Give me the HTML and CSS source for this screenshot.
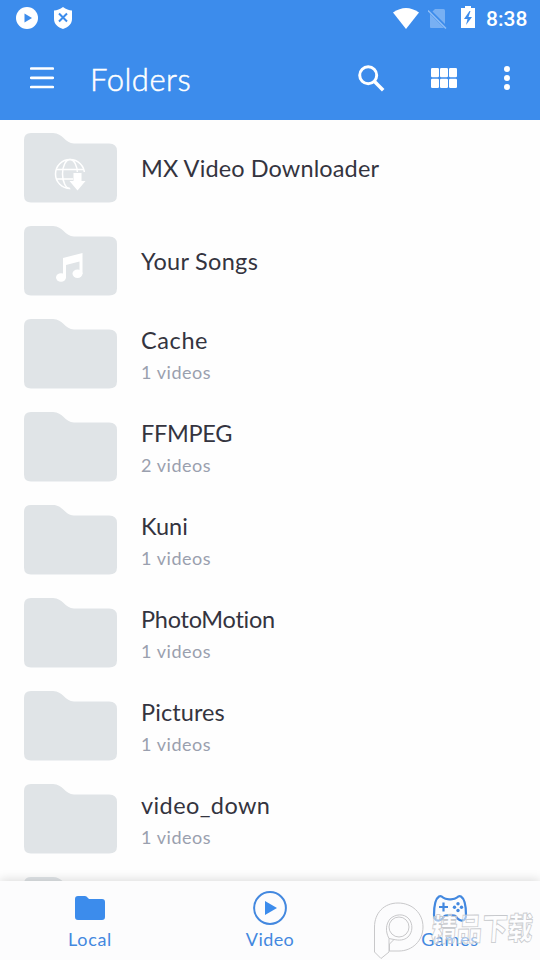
FILE: index.html
```html
<!DOCTYPE html>
<html lang="en">
<head>
<meta charset="utf-8">
<title>Folders</title>
<link rel="stylesheet" href="styles.css">
</head>
<body>
<svg class="defs" width="0" height="0">
  <symbol id="folder" viewBox="0 0 93 70"><path d="M7 0H29C39 0 41 10.500 50 10.500H85Q93 10.500 93 18V62.500Q93 69.500 85 69.500H7Q0 69.500 0 62.500V7Q0 0 7 0Z"/></symbol>
</svg>
<header class="header">
  <div class="status">
    <svg class="st-play" width="22" height="22" viewBox="0 0 22 22"><circle cx="11" cy="11" r="11" fill="#fff"/><path d="M8.500 6.500L16 11l-7.500 4.500Z" fill="#3c8cec"/></svg>
    <svg class="st-shield" width="20" height="22" viewBox="0 0 20 22"><path d="M10 0C7 2.500 4 3.300 1 3.500V12C1 17 5 20.500 10 22C15 20.500 19 17 19 12V3.500C16 3.300 13 2.500 10 0Z" fill="#fff"/><path d="M6 6.500l8 8m0-8l-8 8" stroke="#3c8cec" stroke-width="2"/></svg>
    <span class="grow"></span>
    <svg class="st-wifi" width="26" height="21" viewBox="0 0 26 21"><path d="M0 4.500Q13-4.500 26 4.500L13 21Z" fill="#fff"/></svg>
    <svg class="st-sim" width="20" height="21" viewBox="0 0 20 21"><path d="M7 1H15.500Q17 1 17 2.500V19Q17 20 16 20H3Q2 20 2 19V6Z" fill="#78b0f3"/><path d="M0 1.500L18.500 20" stroke="#3c8cec" stroke-width="3.500"/><path d="M0 2.500L18 20.500" stroke="#8fbef7" stroke-width="1.500"/></svg>
    <svg class="st-bat" width="14" height="22" viewBox="0 0 14 22"><path d="M4 0H10V2H14V22H0V2H4Z" fill="#fff"/><path d="M8.500 5L3 13H6.500L5 19L11 11H7.500L9.500 5Z" fill="#3c8cec"/></svg>
    <span class="clock">8:38</span>
  </div>
  <div class="toolbar">
    <svg class="menu" width="24" height="22" viewBox="0 0 24 22"><path d="M1.200 1.500H22.800M1.200 10.800H22.800M1.200 20H22.800" stroke="#fff" stroke-width="2.700" stroke-linecap="round"/></svg>
    <h1 class="title">Folders</h1>
    <span class="grow"></span>
    <svg class="search" width="27" height="27" viewBox="0 0 27 27" fill="none" stroke="#fff"><circle cx="10.200" cy="10.200" r="8.500" stroke-width="3"/><path d="M16.500 16.500L25.200 25.200" stroke-width="3.500"/></svg>
    <svg class="grid" width="26" height="20" viewBox="0 0 26 20" fill="#fff"><rect width="8" height="9.300" rx="1.300"/><rect x="9" width="8" height="9.300" rx="1.300"/><rect x="18" width="8" height="9.300" rx="1.300"/><rect y="10.700" width="8" height="9.300" rx="1.300"/><rect x="9" y="10.700" width="8" height="9.300" rx="1.300"/><rect x="18" y="10.700" width="8" height="9.300" rx="1.300"/></svg>
    <svg class="more" width="6" height="24" viewBox="0 0 6 24" fill="#fff"><circle cx="3" cy="3" r="3"/><circle cx="3" cy="12" r="3"/><circle cx="3" cy="21" r="3"/></svg>
  </div>
</header>
<main class="list">
  <div class="row">
    <svg class="folder" viewBox="0 0 93 70"><use href="#folder"/><g fill="none" stroke="#fff" stroke-width="1.500"><circle cx="46" cy="41" r="14.500"/><ellipse cx="46" cy="41" rx="7.500" ry="14.500"/><path d="M32 36.500H60M32 46H60"/></g><path d="M49 47V39H62V54L53 60L47 57L42 47Z" fill="#e0e4e7"/><path d="M49.500 40H57.500V48H61.500L53.500 57.500L45.500 48H49.500Z" fill="#fff"/></svg>
    <div class="label single"><span class="name n1">MX Video Downloader</span></div>
  </div>
  <div class="row">
    <svg class="folder" viewBox="0 0 93 70"><use href="#folder"/><g fill="#fff"><path d="M39 32L58.500 27V48H55.500V35.500L42 39V52H39Z"/><ellipse cx="37" cy="51.500" rx="5" ry="4.200"/><ellipse cx="53.500" cy="47.800" rx="5" ry="4.200"/></g></svg>
    <div class="label single"><span class="name n2">Your Songs</span></div>
  </div>
  <div class="row"><svg class="folder" viewBox="0 0 93 70"><use href="#folder"/></svg><div class="label"><span class="name n3">Cache</span><span class="count">1 videos</span></div></div>
  <div class="row"><svg class="folder" viewBox="0 0 93 70"><use href="#folder"/></svg><div class="label"><span class="name n4">FFMPEG</span><span class="count">2 videos</span></div></div>
  <div class="row"><svg class="folder" viewBox="0 0 93 70"><use href="#folder"/></svg><div class="label"><span class="name n5">Kuni</span><span class="count">1 videos</span></div></div>
  <div class="row"><svg class="folder" viewBox="0 0 93 70"><use href="#folder"/></svg><div class="label"><span class="name n6">PhotoMotion</span><span class="count">1 videos</span></div></div>
  <div class="row"><svg class="folder" viewBox="0 0 93 70"><use href="#folder"/></svg><div class="label"><span class="name n7">Pictures</span><span class="count">1 videos</span></div></div>
  <div class="row"><svg class="folder" viewBox="0 0 93 70"><use href="#folder"/></svg><div class="label"><span class="name n8">video_down</span><span class="count">1 videos</span></div></div>
  <div class="row"><svg class="folder" viewBox="0 0 93 70"><use href="#folder"/></svg></div>
</main>
<nav class="nav">
  <div class="tab"><svg width="36" height="36" viewBox="0 0 36 36"><path d="M6 6H13Q14.500 6 16 8L17 9H30Q33 9 33 12V27Q33 30 30 30H6Q3 30 3 27V9Q3 6 6 6Z" fill="#3c8cec"/></svg><span class="t1">Local</span></div>
  <div class="tab"><svg width="36" height="36" viewBox="0 0 36 36"><circle cx="18" cy="18" r="15.900" fill="none" stroke="#4388df" stroke-width="2"/><path d="M13 11L25 18L13 25Z" fill="#3c8cec"/></svg><span class="t2">Video</span></div>
  <div class="tab"><svg width="36" height="36" viewBox="0 0 36 36"><path d="M7 6.500Q9 5.500 11 7.500Q13 9.500 18 9.300Q23 9.500 25 7.500Q27 5.500 29 6.500C33 9 34 15 34 25Q34 31 29 30.500Q26 30 24 26.500Q23 25 18 25Q13 25 12 26.500Q10 30 7 30.500Q2 31 2 25C2 15 3 9 7 6.500Z" fill="none" stroke="#4388df" stroke-width="2.200"/><path d="M7 17H16M11.500 12.500V21.500" stroke="#4388df" stroke-width="2.200"/><g fill="#4388df"><circle cx="26" cy="13.800" r="1.700"/><circle cx="26" cy="20.500" r="1.700"/><circle cx="22.500" cy="17.200" r="1.700"/><circle cx="29.500" cy="17.200" r="1.700"/></g></svg><span class="t3">Games</span></div>
  <svg class="mark" width="168" height="66" viewBox="0 0 168 66"><g fill="none" stroke="#c8c8ca"><path d="M2.500 57V32C2.500 18 12 8 26 8C40 8 51 18 51 32C51 46 40 56 27 56H17.500V49L22 44.500L17 43.500V57L9 63.500Z"/><path d="M17 43.500C13 36 14 29 18 24C23 19 32 18 37 24C41 29 41 37 36 42C32 45.500 27 45.500 22 44.500"/><circle cx="27" cy="32" r="10"/></g><text class="mark-text" x="0" y="0" textLength="101" lengthAdjust="spacingAndGlyphs" transform="translate(59 46) skewX(-5) rotate(-1)">精品下载</text></svg>
</nav>
</body>
</html>
```
FILE: styles.css
```css
* { box-sizing: border-box; }
body { margin: 0; width: 540px; height: 960px; overflow: hidden; display: flex; flex-direction: column; background: #fefefe; font-family: Lato, "Noto Sans CJK SC", sans-serif; font-variant-ligatures: none; }
svg { display: block; flex: none; }
.defs { position: absolute; }
.grow { flex: 1; }
.header { height: 120px; flex: none; background: #3c8cec; color: #fff; }
.status { height: 36px; display: flex; align-items: center; padding: 0 12px 0 16px; }
.st-shield { margin-left: 15px; }
.st-sim { margin-left: 9px; }
.st-bat { margin-left: 13px; margin-bottom: 2px; }
.clock { width: 42px; margin-left: 11px; font: 500 21px/36px Roboto, sans-serif; padding-top: 2px; white-space: nowrap; }
.toolbar { height: 84px; display: flex; align-items: center; padding: 0 30px; }
.title { margin: 1px 0 0 36px; font-size: 31px; line-height: 40px; font-weight: 300; letter-spacing: .5px; -webkit-text-stroke: .5px #fff; }
.search { margin-right: 46px; }
.grid { margin-right: 47px; }
.list { flex: 1; min-height: 0; overflow: hidden; padding-top: 3px; }
.row { height: 93px; display: flex; align-items: center; padding-left: 24px; }
.folder { width: 93px; height: 70px; margin-bottom: 4px; fill: #e0e4e7; }
.label { margin-left: 24px; padding-top: 1px; display: flex; flex-direction: column; }
.single { padding: 0 0 3px; }
.name { font-size: 23.500px; line-height: 32px; color: #34343f; white-space: nowrap; }
.n1 { letter-spacing: .12px; }
.n2 { letter-spacing: .3px; }
.n3 { letter-spacing: .6px; }
.n4 { letter-spacing: -.3px; }
.n6 { letter-spacing: -.25px; }
.n7 { letter-spacing: .1px; }
.n8 { letter-spacing: .4px; }
.count { font-size: 18px; line-height: 32px; color: #9aa0ae; letter-spacing: .55px; }
.nav { position: relative; height: 79px; flex: none; display: flex; background: #fcfcfd; box-shadow: 0 -1px 10px rgba(0,0,0,.15); }
.tab { width: 180px; padding-top: 9px; display: flex; flex-direction: column; align-items: center; color: #4388df; font-size: 18px; line-height: 27px; letter-spacing: .4px; }
.t1, .t3 { letter-spacing: .7px; }
.mark { position: absolute; left: 372px; top: 14px; }
.mark-text { font: 900 31px "Noto Sans CJK SC", sans-serif; fill: #fff; fill-opacity: .5; stroke: #c6c8cc; stroke-width: .8; }
```
